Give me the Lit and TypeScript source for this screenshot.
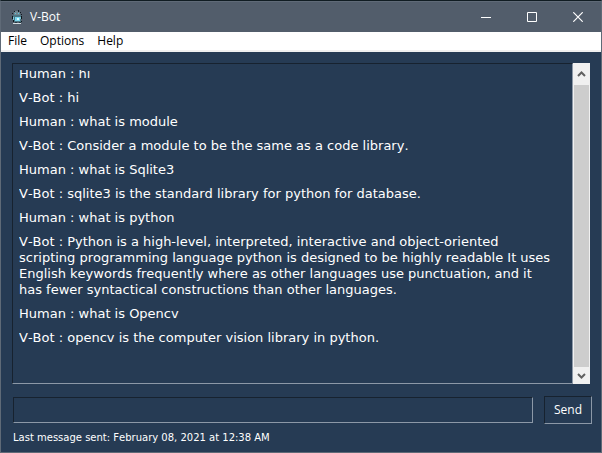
import { LitElement, html, css } from "lit";
import { customElement, state } from "lit/decorators.js";

interface Message {
  from: string;
  text: string;
}

@customElement("title-bar")
class TitleBar extends LitElement {
  static styles = css`
    :host {
      display: flex;
      align-items: center;
      height: 31px;
      box-sizing: border-box;
      background: #525d6b;
      border-top: 1px solid #5f6a77;
      color: #fff;
      font: 12px/16px "Open Sans", sans-serif;
    }
    .logo {
      width: 16px;
      height: 16px;
      margin-left: 8px;
    }
    .title {
      flex: 1;
      margin: 0 0 0 5px;
      font: inherit;
    }
    .control {
      width: 46px;
      height: 30px;
      padding: 0;
      border: 0;
      background: none;
      display: grid;
      place-items: center;
    }
    .control svg {
      width: 10px;
      height: 10px;
      fill: none;
      stroke: #fff;
    }
  `;

  render() {
    return html`
      <svg class="logo" viewBox="0 0 16 16" aria-hidden="true">
        <path d="M5 2h5v1h1v3H5z" fill="#6f8590" />
        <path d="M9 1h1v2H9zM5 2h1v1H5zM11 3h1v1h-1zM3 4h1v1H3zM12 5h1v1h-1z" fill="#111c22" />
        <path d="M6 4h1v1H6zM9 4h1v1H9z" fill="#5cc3dd" />
        <path d="M4 6h8v7H4z" fill="#4a7583" />
        <path d="M6 8h5v4H6z" fill="#79d6ee" />
        <path d="M8 9h2v2H8z" fill="#d9faff" />
        <path d="M3 7h1v3H3zM12 7h1v3h-1zM4 11h1v2H4zM12 12h1v1h-1z" fill="#0d161b" />
        <path d="M4 8h1v3H4zM11 8h1v2h-1z" fill="#7fc4d3" />
        <path d="M4 14h8v1H4z" fill="#d5dbdf" />
        <path d="M6 13h2v1H6zM10 13h2v1h-2z" fill="#253740" />
      </svg>
      <h1 class="title">V-Bot</h1>
      <button class="control" aria-label="Minimize">
        <svg viewBox="0 0 10 10"><path d="M0 5.5h10" /></svg>
      </button>
      <button class="control" aria-label="Maximize">
        <svg viewBox="0 0 10 10"><path d="M.5 .5h9v9h-9z" /></svg>
      </button>
      <button class="control" aria-label="Close">
        <svg viewBox="0 0 10 10"><path d="M.3 .3l9.4 9.4M9.7 .3L.3 9.7" stroke-width="1.2" /></svg>
      </button>
    `;
  }
}

@customElement("menu-bar")
class MenuBar extends LitElement {
  static styles = css`
    :host {
      display: flex;
      gap: 13px;
      height: 20px;
      box-sizing: border-box;
      padding: 0 7px;
      background: #fff;
      border-bottom: 2px solid #f0f0f0;
    }
    .item {
      padding: 0;
      border: 0;
      background: none;
      color: #000;
      font: 12px/18px "Open Sans", sans-serif;
    }
  `;

  render() {
    return ["File", "Options", "Help"].map(
      (name) => html`<button class="item">${name}</button>`
    );
  }
}

@customElement("chat-log")
class ChatLog extends LitElement {
  static properties = { messages: { attribute: false } };
  declare messages: Message[];

  static styles = css`
    :host {
      display: flex;
      min-height: 0;
    }
    .frame {
      flex: 1;
      min-width: 0;
      display: flex;
      padding: 6px;
      border: 1px solid #8c98a7;
      border-top-color: #17222f;
      border-left-color: #17222f;
    }
    .lines {
      flex: 1;
      min-width: 0;
      display: flex;
      flex-direction: column;
      justify-content: flex-end;
      gap: 8px;
      padding: 0 8px 31px 0;
      overflow: hidden;
      color: #fff;
      font: 13px/16px "DejaVu Sans", Verdana, sans-serif;
      font-kerning: none;
    }
    .line {
      flex: none;
      margin: 0;
    }
    .scrollbar {
      display: flex;
      flex-direction: column;
      width: 17px;
      box-sizing: border-box;
      padding: 0 1px;
      background: #f0f0f0;
    }
    .arrow {
      height: 22px;
      padding: 0;
      border: 0;
      background: none;
      display: grid;
      place-items: center;
    }
    .arrow.down {
      height: 17px;
    }
    .arrow svg {
      width: 9px;
      height: 6px;
      fill: none;
      stroke: #606060;
      stroke-width: 2;
    }
    .thumb {
      flex: 1;
      background: #cdcdcd;
    }
  `;

  render() {
    return html`
      <div class="frame">
        <div class="lines" role="log">
          ${this.messages.map(
            (m) => html`<p class="line">${m.from} : ${m.text}</p>`
          )}
        </div>
      </div>
      <div class="scrollbar">
        <button class="arrow" aria-label="Scroll up">
          <svg viewBox="0 0 9 6"><path d="M1 5l3.500-3.500L8 5" /></svg>
        </button>
        <div class="thumb"></div>
        <button class="arrow down" aria-label="Scroll down">
          <svg viewBox="0 0 9 6"><path d="M1 1l3.500 3.500L8 1" /></svg>
        </button>
      </div>
    `;
  }
}

@customElement("app-root")
class AppRoot extends LitElement {
  @state() private messages: Message[] = [
    { from: "Human", text: "hi" },
    { from: "V-Bot", text: "hi" },
    { from: "Human", text: "what is module" },
    { from: "V-Bot", text: "Consider a module to be the same as a code library." },
    { from: "Human", text: "what is Sqlite3" },
    { from: "V-Bot", text: "sqlite3 is the standard library for python for database." },
    { from: "Human", text: "what is python" },
    {
      from: "V-Bot",
      text: "Python is a high-level, interpreted, interactive and object-oriented scripting programming language python is designed to be highly readable It uses English keywords frequently where as other languages use punctuation, and it has fewer syntactical constructions than other languages.",
    },
    { from: "Human", text: "what is Opencv" },
    { from: "V-Bot", text: "opencv is the computer vision library in python." },
  ];

  static styles = css`
    :host {
      display: flex;
      flex-direction: column;
      height: 100vh;
      box-sizing: border-box;
      border: 1px solid #5f6a77;
      border-top-color: #101c22;
      background: #263b54;
    }
    .content {
      flex: 1;
      min-height: 0;
      display: flex;
      flex-direction: column;
      padding: 11px 9px 6px 11px;
    }
    chat-log {
      flex: 1;
      margin-right: 2px;
    }
    .compose {
      display: flex;
      align-items: center;
      gap: 11px;
      margin: 12px 0 6px 1px;
    }
    .entry,
    .send {
      box-sizing: border-box;
      border: 1px solid #8c98a7;
      border-top-color: #17222f;
      border-left-color: #17222f;
      border-radius: 0;
      background: none;
      color: #fff;
    }
    .entry {
      flex: 1;
      min-width: 0;
      height: 26px;
      padding: 0 4px;
      outline: none;
      font: 13px/16px "DejaVu Sans", Verdana, sans-serif;
    }
    .send {
      width: 48px;
      height: 28px;
      padding: 0;
      font: 12px/16px "Open Sans", sans-serif;
    }
    .status {
      margin: 0 0 0 1px;
      color: #fff;
      font: 10px/16px "DejaVu Sans", Verdana, sans-serif;
      font-kerning: none;
    }
  `;

  render() {
    return html`
      <title-bar></title-bar>
      <menu-bar></menu-bar>
      <main class="content">
        <chat-log .messages=${this.messages}></chat-log>
        <form class="compose" @submit=${(e: Event) => e.preventDefault()}>
          <input class="entry" type="text" aria-label="Message" />
          <button class="send">Send</button>
        </form>
        <p class="status">Last message sent: February 08, 2021 at 12:38 AM</p>
      </main>
    `;
  }
}
